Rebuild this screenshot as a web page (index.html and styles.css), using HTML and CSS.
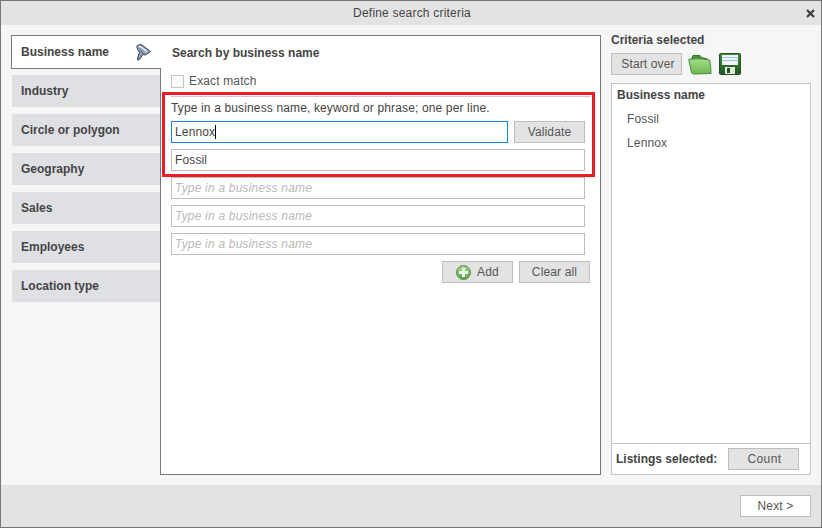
FILE: index.html
```html
<!DOCTYPE html>
<html lang="en">
<head>
<meta charset="utf-8">
<title>Define search criteria</title>
<link rel="stylesheet" href="styles.css">
</head>
<body>
<div class="window">
  <header class="titlebar">
    <span class="title">Define search criteria</span>
    <svg class="close" width="9" height="9" viewBox="0 0 9 9"><path d="M1 1 8 8M8 1 1 8" stroke="#3c3c3c" stroke-width="2.2" fill="none"/></svg>
  </header>
  <div class="main">
    <nav class="nav">
      <div class="tab active">
        <span>Business name</span>
        <svg class="funnel" width="15" height="17" viewBox="0 0 15 17">
          <path d="M.8 2.500C1 .8 3.500.2 6 1l8.500 6.500-5 3.500-2.500-.5L3.500 15.500 1.800 16.200 1.500 14 3.500 8.500C2 6 .8 4 .8 2.500Z" fill="#8a9db3" stroke="#33465a" stroke-width="1"/>
          <path d="M2.500 2.500C5 2 8 5 11 8" stroke="#eef2f7" stroke-width="1.400" fill="none"/>
          <path d="M4 6.500 8 10" stroke="#56697e" stroke-width="1" fill="none"/>
        </svg>
      </div>
      <div class="tab">Industry</div>
      <div class="tab">Circle or polygon</div>
      <div class="tab">Geography</div>
      <div class="tab">Sales</div>
      <div class="tab">Employees</div>
      <div class="tab">Location type</div>
    </nav>
    <section class="panel">
      <h2 class="panel-title">Search by business name</h2>
      <label class="exact"><span class="checkbox"></span>Exact match</label>
      <div class="names">
        <p class="hint">Type in a business name, keyword or phrase; one per line.</p>
        <div class="row">
          <div class="input focused">Lennox<span class="caret"></span></div>
          <button class="btn validate">Validate</button>
        </div>
        <div class="input">Fossil</div>
        <div class="input empty">Type in a business name</div>
        <div class="input empty">Type in a business name</div>
        <div class="input empty">Type in a business name</div>
      </div>
      <div class="actions">
        <button class="btn">
          <svg class="plus" width="15" height="15" viewBox="0 0 15 15">
            <defs>
              <linearGradient id="plusFill" x1="0" y1="0" x2="0" y2="1">
                <stop offset="0" stop-color="#a5d98c"/>
                <stop offset="1" stop-color="#4ea636"/>
              </linearGradient>
            </defs>
            <circle cx="7.500" cy="7.500" r="7" fill="url(#plusFill)" stroke="#6d7f6a" stroke-width="1"/>
            <path d="M7.500 3v9M3 7.500h9" stroke="#f2f9ee" stroke-width="3"/>
          </svg>Add</button>
        <button class="btn">Clear all</button>
      </div>
      <div class="highlight"></div>
    </section>
    <aside class="side">
      <h3 class="side-title">Criteria selected</h3>
      <div class="tools">
        <button class="btn nudged">Start over</button>
        <svg width="24" height="21" viewBox="0 0 24 21">
          <defs>
            <linearGradient id="folderFill" x1="0" y1="0" x2="0" y2="1">
              <stop offset="0" stop-color="#a4dc88"/>
              <stop offset="1" stop-color="#6fb755"/>
            </linearGradient>
          </defs>
          <path d="M3 6 5 1.500h7l1.500 2 6 1.500 1 3H5Z" fill="#4a8f39" stroke="#3a7430"/>
          <path d="M.7 5.500C6 4.500 14 4.500 21.500 6c.8 2 1.500 8 1.500 13.500L6 20c-1.500 0-2-.5-2.500-1.500Z" fill="url(#folderFill)" stroke="#4a8a3c"/>
        </svg>
        <svg width="22" height="22" viewBox="0 0 22 22">
          <defs>
            <linearGradient id="diskFill" x1="0" y1="0" x2="0" y2="1">
              <stop offset="0" stop-color="#3f8a3c"/>
              <stop offset="1" stop-color="#1f5a24"/>
            </linearGradient>
          </defs>
          <rect x=".5" y=".5" width="21" height="21" rx="1" fill="url(#diskFill)" stroke="#23541f"/>
          <rect x="3" y="2" width="16" height="10" fill="#f1f5f9"/>
          <path d="M3 4.500h16M3 7.500h16" stroke="#9cc3e6" stroke-width="1"/>
          <rect x="6" y="14" width="10" height="7" fill="#e3ebdf"/>
          <rect x="8" y="15" width="3" height="5" fill="#23541f"/>
        </svg>
      </div>
      <div class="box">
        <div class="box-body">
          <div class="group-name">Business name</div>
          <div class="item">Fossil</div>
          <div class="item">Lennox</div>
        </div>
        <div class="box-foot">
          <span class="listings">Listings selected:</span>
          <button class="btn count">Count</button>
        </div>
      </div>
    </aside>
  </div>
  <footer class="footer">
    <button class="btn next">Next &gt;</button>
  </footer>
</div>
</body>
</html>
```
FILE: styles.css
```css
* { box-sizing: border-box; }
html, body { margin: 0; padding: 0; }
body {
  width: 822px;
  height: 528px;
  font-family: "Liberation Sans", Arial, sans-serif;
  font-size: 12px;
  letter-spacing: .14px;
  color: #444;
  overflow: hidden;
}
.window {
  width: 822px;
  height: 528px;
  border: 1px solid #777;
  display: flex;
  flex-direction: column;
  background: #f6f6f6;
}
.titlebar {
  height: 24px;
  flex: none;
  background: #e3e3e3;
  display: flex;
  align-items: center;
  justify-content: center;
  position: relative;
}
.title { color: #444; letter-spacing: .2px; padding-left: 2px; }
.close { position: absolute; right: 6px; top: 8px; }
.main {
  flex: 1;
  display: flex;
  padding: 10px;
}
.nav {
  width: 149px;
  flex: none;
  display: flex;
  flex-direction: column;
  gap: 7px;
}
.tab {
  height: 32px;
  margin-left: 1px;
  background: #dfe0e4;
  color: #444;
  font-weight: bold;
  letter-spacing: 0;
  display: flex;
  align-items: center;
  justify-content: space-between;
  padding: 0 9px;
}
.tab.active {
  height: 34px;
  margin-left: 0;
  margin-right: -1px;
  margin-bottom: -1px;
  background: #fff;
  border: 1px solid #777;
  border-right: 0;
  padding: 0 0 0 9px;
  position: relative;
  z-index: 1;
}
.funnel { margin-right: 10px; }
.panel {
  width: 441px;
  flex: none;
  background: #fff;
  border: 1px solid #777;
  padding: 0 10px;
  position: relative;
}
.panel-title {
  margin: 10px 0 0 1px;
  font-size: 12px;
  line-height: 14px;
  font-weight: bold;
  letter-spacing: 0;
  color: #444;
}
.exact {
  display: flex;
  align-items: center;
  gap: 5px;
  margin-top: 14px;
  height: 14px;
  color: #555;
}
.checkbox {
  width: 13px;
  height: 13px;
  border: 1px solid #c4c4c4;
  background: #fafafa;
}
.names {
  margin-top: 8px;
  width: 420px;
  border-top: 1px solid #ccc;
  padding-right: 6px;
  display: flex;
  flex-direction: column;
  gap: 6px;
}
.hint { margin: 4px 0 0 0; line-height: 14px; color: #444; height: 14px; }
.row { display: flex; gap: 6px; }
.input {
  height: 22px;
  width: 414px;
  border: 1px solid #bdbdbd;
  background: #fff;
  padding: 0 3px;
  line-height: 20px;
  color: #444;
  white-space: nowrap;
}
.input.focused {
  width: 337px;
  border-color: #1a7fe0;
}
.caret {
  display: inline-block;
  width: 1px;
  height: 14px;
  background: #000;
  vertical-align: -3px;
}
.input.empty { color: #b9b9b9; font-style: italic; letter-spacing: .2px; }
.btn {
  width: 71px;
  height: 22px;
  padding: 0;
  border: 1px solid #bdbdbd;
  background: #e3e3e3;
  color: #555;
  font: 12px "Liberation Sans", Arial, sans-serif;
  letter-spacing: .14px;
  display: flex;
  align-items: center;
  justify-content: center;
}
.btn.nudged { padding-left: 3px; }
.btn.count { padding-left: 2px; letter-spacing: .4px; }
.validate { flex: none; }
.actions {
  display: flex;
  justify-content: flex-end;
  gap: 6px;
  margin-top: 6px;
  width: 419px;
}
.plus { margin-right: 6px; }
.highlight {
  position: absolute;
  left: 1px;
  top: 56px;
  width: 433px;
  height: 85px;
  border: 3px solid #ed1c24;
  pointer-events: none;
}
.side {
  width: 200px;
  flex: none;
  margin: -2px 0 0 10px;
  display: flex;
  flex-direction: column;
}
.side-title {
  margin: 0;
  font-size: 12px;
  line-height: 14px;
  height: 20px;
  font-weight: bold;
  letter-spacing: 0;
  color: #444;
}
.tools { display: flex; align-items: center; gap: 6px; height: 22px; }
.tools svg + svg { margin-left: 1px; }
.box {
  margin-top: 8px;
  flex: 1;
  border: 1px solid #c4c4c4;
  background: #fff;
  display: flex;
  flex-direction: column;
}
.box-body { flex: 1; padding: 4px 5px; }
.group-name { font-weight: bold; line-height: 14px; letter-spacing: 0; }
.item { line-height: 14px; margin-top: 10px; padding-left: 10px; color: #555; }
.box-foot {
  height: 31px;
  flex: none;
  border-top: 1px solid #c4c4c4;
  display: flex;
  align-items: center;
  justify-content: space-between;
  padding: 0 11px 0 4px;
}
.listings { font-weight: bold; letter-spacing: 0; }
.footer {
  height: 42px;
  flex: none;
  background: #e3e3e3;
  display: flex;
  justify-content: flex-end;
  align-items: flex-start;
  padding: 10px 10px 0 0;
}
.next { background: #fff; }
```
